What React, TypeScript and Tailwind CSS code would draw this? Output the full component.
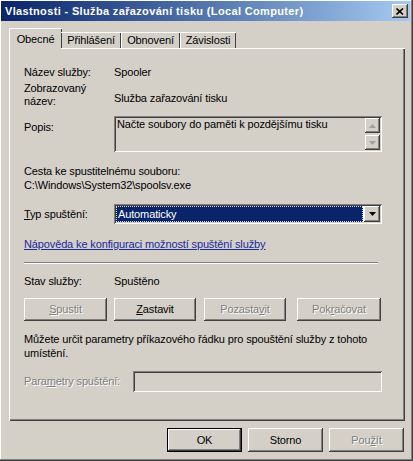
import React from "react";

const font = "font-['Liberation_Sans',Arial,sans-serif]";
const raised =
  "bg-[#d4d0c8] shadow-[inset_-1px_-1px_0_#404040,inset_1px_1px_0_#ffffff,inset_-2px_-2px_0_#808080,inset_2px_2px_0_#d4d0c8]";
const sunken =
  "shadow-[inset_1px_1px_0_#808080,inset_-1px_-1px_0_#ffffff,inset_2px_2px_0_#404040,inset_-2px_-2px_0_#d4d0c8]";
const disabledText = "text-[#808080] [text-shadow:1px_1px_0_#ffffff]";

const Btn: React.FC<{ className?: string; disabled?: boolean; children: React.ReactNode }> = ({
  className = "",
  disabled,
  children,
}) => (
  <div
    className={`${raised} flex items-center justify-center h-[23px] ${disabled ? disabledText : "text-black"} ${className}`}
  >
    <span>{children}</span>
  </div>
);

const Tri: React.FC<{ up?: boolean; color: string }> = ({ up, color }) => (
  <svg width="7" height="4" viewBox="0 0 7 4" className="block">
    <path d={up ? "M3.5 0 L7 4 L0 4 Z" : "M0 0 L7 0 L3.5 4 Z"} fill={color} />
  </svg>
);

export default function App() {
  return (
    <div
      className={`${font} text-[11px] leading-[13px] tracking-[-0.13px] w-[413px] h-[461px] bg-[#d4d0c8] pt-px pl-px pr-[3px] pb-[3px] flex flex-col shadow-[inset_-1px_-1px_0_#404040,inset_-2px_-2px_0_#808080,inset_1px_1px_0_#ffffff] overflow-hidden select-none`}
    >
      {/* Title bar */}
      <div className="h-[20px] flex items-center justify-between pl-[4px] pr-[2px] bg-gradient-to-r from-[#0a246a] to-[#a6caf0]">
        <span className="text-white font-bold text-[11px] tracking-[0.35px]">
          Vlastnosti - Služba zařazování tisku (Local Computer)
        </span>
        <div className={`${raised} w-[16px] h-[14px] flex items-center justify-center`}>
          <svg width="8" height="7" viewBox="0 0 8 7">
            <path d="M0.5 0.5 L7 6.5 M7 0.5 L0.5 6.5" stroke="#000" strokeWidth="1.6" />
          </svg>
        </div>
      </div>

      {/* Tabs */}
      <div className="ml-[8px] mt-[7px] h-[21px] flex items-end relative z-10">
        <div className="w-[53px] h-[21px] bg-[#d4d0c8] shadow-[inset_1px_1px_0_#ffffff,inset_-1px_0_0_#404040] flex items-start justify-center pt-[5px] -mr-px">
          Obecné
        </div>
        <div className="w-[60px] h-[17px] shadow-[inset_0_1px_0_#ffffff,inset_-1px_0_0_#404040] border-b border-white flex items-center justify-center pt-[1px]">
          Přihlášení
        </div>
        <div className="w-[59px] h-[17px] shadow-[inset_1px_1px_0_#ffffff,inset_-1px_0_0_#404040] border-b border-white flex items-center justify-center pt-[1px]">
          Obnovení
        </div>
        <div className="w-[56px] h-[17px] shadow-[inset_1px_1px_0_#ffffff,inset_-1px_0_0_#404040] border-b border-white flex items-center justify-center pt-[1px]">
          Závislosti
        </div>
      </div>

      {/* Panel */}
      <div className="ml-[8px] w-[396px] h-[373px] -mt-px shadow-[inset_1px_1px_0_#ffffff,inset_-1px_-1px_0_#404040,inset_-2px_-2px_0_#808080] pl-[15px] pr-[23px] pt-[18px] flex flex-col">
        <div className="flex">
          <div className="w-[90px]">Název služby:</div>
          <div>Spooler</div>
        </div>

        <div className="flex mt-[3px]">
          <div className="w-[90px]">
            Zobrazovaný
            <br />
            název:
          </div>
          <div className="mt-[10px]">Služba zařazování tisku</div>
        </div>

        <div className="flex mt-[8px]">
          <div className="w-[90px] mt-[5px]">Popis:</div>
          <div className={`${sunken} relative h-[36px] flex-1 pl-[3px] pt-[2px]`}>
            Načte soubory do paměti k pozdějšímu tisku
            <div className="absolute right-[2px] top-[2px] bottom-[2px] w-[15px] flex flex-col justify-between">
              <div className={`${raised} h-[15px] flex items-center justify-center`}>
                <Tri up color="#a0a0a0" />
              </div>
              <div className={`${raised} h-[15px] flex items-center justify-center`}>
                <Tri color="#a0a0a0" />
              </div>
            </div>
          </div>
        </div>

        <div className="mt-[13px]">Cesta ke spustitelnému souboru:</div>
        <div className="mt-[1px]">C:\Windows\System32\spoolsv.exe</div>

        <div className="flex items-center mt-[12px]">
          <div className="w-[90px]">
            <u>T</u>yp spuštění:
          </div>
          <div className={`${sunken} bg-white h-[20px] flex-1 flex items-center p-[2px]`}>
            <div className="flex-1 h-full bg-[#0a246a] text-white flex items-center pl-[2px] outline outline-1 outline-dotted outline-[#d4d0c8] -outline-offset-1 mr-[1px]">
              Automaticky
            </div>
            <div className={`${raised} w-[16px] h-full flex items-center justify-center`}>
              <Tri color="#000" />
            </div>
          </div>
        </div>

        <div className="mt-[14px] text-[#1a2a9c] underline">
          Nápověda ke konfiguraci možností spuštění služby
        </div>

        <div className="mt-[11px] mr-[4px] h-[2px] border-t border-[#808080] border-b border-b-white" />

        <div className="flex mt-[11px]">
          <div className="w-[90px]">Stav služby:</div>
          <div>Spuštěno</div>
        </div>

        <div className="flex mt-[10px]">
          <Btn disabled className="w-[83px]">
            <u>S</u>pustit
          </Btn>
          <Btn className="w-[82px] ml-[7px]">
            <u>Z</u>astavit
          </Btn>
          <Btn disabled className="w-[82px] ml-[8px]">
            Pozasta<u>v</u>it
          </Btn>
          <Btn disabled className="w-[84px] ml-[11px]">
            Pok<u>r</u>ačovat
          </Btn>
        </div>

        <div className="mt-[11px] leading-[14px]">
          Můžete určit parametry příkazového řádku pro spouštění služby z tohoto
          <br />
          umístění.
        </div>

        <div className="flex items-center mt-[11px]">
          <div className={`w-[109px] ${disabledText}`}>
            Para<u>m</u>etry spuštění:
          </div>
          <div className={`${sunken} h-[21px] flex-1`} />
        </div>
      </div>

      {/* Dialog buttons */}
      <div className="flex justify-end mt-[7px] mr-[6px] gap-[6px]">
        <div className="w-[75px] h-[24px] border border-black flex">
          <Btn className="flex-1 h-full">OK</Btn>
        </div>
        <Btn className="w-[75px] h-[24px]">Storno</Btn>
        <Btn disabled className="w-[75px] h-[24px]">
          Pou<u>ž</u>ít
        </Btn>
      </div>
    </div>
  );
}
